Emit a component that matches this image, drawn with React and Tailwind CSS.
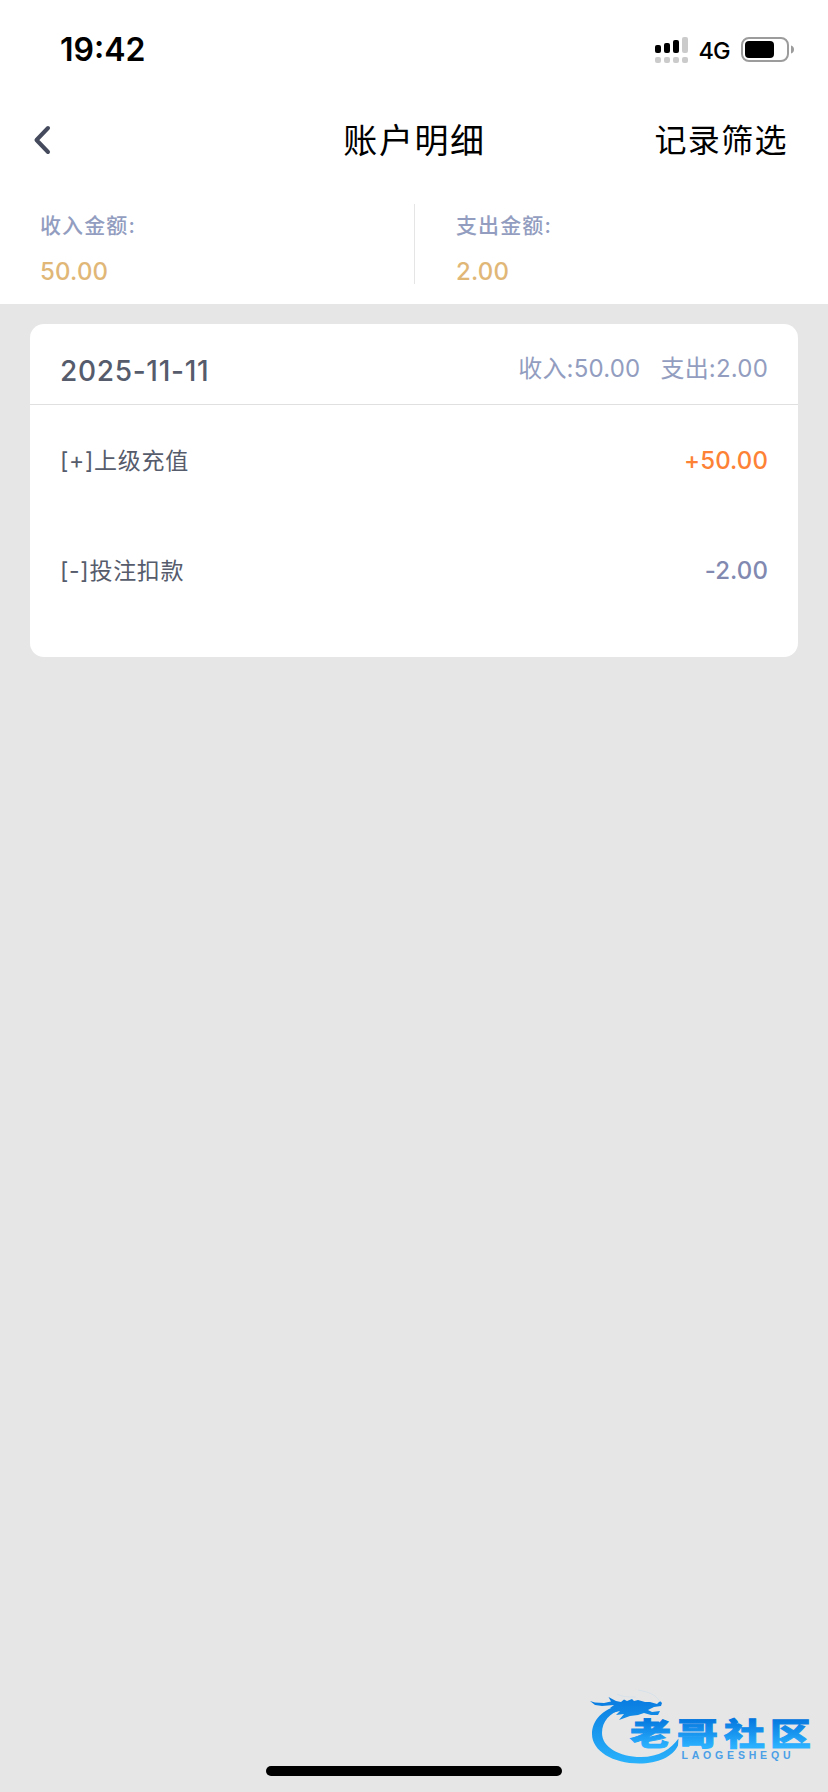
import React from 'react';

const summary = [
  { label: '收入金额:', value: '50.00' },
  { label: '支出金额:', value: '2.00' },
];

const records = [
  { id: 1, title: '[+]上级充值', amount: '+50.00', color: 'text-[#fd8236]' },
  { id: 2, title: '[-]投注扣款', amount: '-2.00', color: 'text-[#8189b0]' },
];

function StatusIcons() {
  return (
    <svg width="140" height="28" viewBox="0 0 140 28" className="block">
      {/* signal */}
      <g fill="#000">
        <rect x="0" y="9" width="6" height="8" rx="2" />
        <rect x="9" y="7" width="6" height="10" rx="2" />
        <rect x="18" y="4" width="6" height="13" rx="2" />
      </g>
      <g fill="#cbcbcb">
        <rect x="27" y="1" width="6" height="16" rx="2" />
        <rect x="0" y="21" width="6" height="6" rx="2" />
        <rect x="9" y="21" width="6" height="6" rx="2" />
        <rect x="18" y="21" width="6" height="6" rx="2" />
        <rect x="27" y="21" width="6" height="6" rx="2" />
      </g>
      <text x="43.5" y="23" fontSize="23.5" fontWeight="500" textLength="32" fill="#000">4G</text>
      {/* battery */}
      <rect x="87" y="2" width="46" height="23" rx="7" fill="none" stroke="#9c9c9c" strokeWidth="2" />
      <rect x="90" y="5" width="29" height="17" rx="4" fill="#000" />
      <path d="M136 9.5c2 .5 3 2 3 4s-1 3.500-3 4z" fill="#9c9c9c" />
    </svg>
  );
}

function Logo() {
  return (
    <svg width="258" height="112" viewBox="0 0 258 112" className="absolute right-0 bottom-0">
      <defs>
        <linearGradient id="ring" x1="0" y1="18" x2="0" y2="86" gradientUnits="userSpaceOnUse">
          <stop offset="0" stopColor="#087be0" />
          <stop offset="1" stopColor="#2bb4fc" />
        </linearGradient>
        <linearGradient id="word" x1="0" y1="2" x2="0" y2="-26" gradientUnits="userSpaceOnUse">
          <stop offset="0" stopColor="#2bb2ff" />
          <stop offset="1" stopColor="#0578df" />
        </linearGradient>
      </defs>
      <g fill="url(#ring)">
        <path d="M50 25C33 29 22 40 22 54c0 17 21 29.500 47 29.500 19 0 34-7 39-18l.5-7C101 69 89 77 71 77 49 77 32 67 32 53c0-12 8-20 20-24z" />
        <path d="M20 21L25 22.500L34 23L41 21.500L38.500 17L46 21L51 22L54 19.500L57 21L62 19L64 21L68 20L75 22L80 22L87 24L90 21L92 23L91 26L84 27L78 30L82 32L90 31L88 35L81 35L74 33L68 35L60 36L49 40L54 34L46 35L50 31L42 33L48 28L40 28L44 25L32 26L25 25Z" />
      </g>
      <path d="M47 14c5 3 12 3 19 3M68 10c10 2 18 4 22 12" fill="none" stroke="#d3dfea" strokeWidth="0.8" />
      <g
        fill="url(#word)"
        stroke="url(#word)"
        strokeWidth="0.9"
        fontWeight="900"
        fontSize="31"
        fontFamily="'Noto Sans CJK SC', sans-serif"
      >
        <text transform="translate(60 65) scale(1.32 0.98)">老</text>
        <text transform="translate(107 65) scale(1.32 0.98)">哥</text>
        <text transform="translate(154 65) scale(1.32 0.98)">社</text>
        <text transform="translate(200 65) scale(1.32 0.98)">区</text>
      </g>
      <text
        x="111.500"
        y="78.500"
        fontSize="10.500"
        fontWeight="700"
        fontFamily="'Liberation Sans', sans-serif"
        textLength="109"
        fill="#4a9fe6"
      >
        LAOGESHEQU
      </text>
    </svg>
  );
}

export default function App() {
  return (
    <div className="relative flex h-[1792px] w-[828px] flex-col overflow-hidden bg-[#e6e6e6] font-['Inter','Noto_Sans_CJK_SC',sans-serif]">
      <div className="h-[304px] bg-white">
        <div className="flex h-[100px] items-center justify-between pr-[33px] pl-[60px]">
          <span className="text-[32px] leading-none font-semibold">19:42</span>
          <StatusIcons />
        </div>

        <header className="grid h-20 grid-cols-[1fr_auto_1fr] items-center pr-10 pl-[33px] text-black">
          <svg width="18" height="30" viewBox="0 0 18 30" fill="none">
            <path d="M15 3 3.500 15 15 27" stroke="#454b5c" strokeWidth="4" strokeLinecap="round" strokeLinejoin="round" />
          </svg>
          <h1 className="pt-0.5 pl-2 text-center text-[34px] leading-10 tracking-[1.600px] whitespace-nowrap">账户明细</h1>
          <span className="pt-0.5 text-right text-[32px] leading-10 tracking-[1.400px] whitespace-nowrap">记录筛选</span>
        </header>

        <div className="mt-6 grid h-20 grid-cols-2">
          {summary.map((item) => (
            <div key={item.label} className="h-20 border-l border-[#e5e5e5] pl-[41px] first:border-l-0 first:pl-[40px]">
              <p className="mt-[7px] text-[21px] leading-[30px] font-medium tracking-[1.100px] text-[#929dc0]">{item.label}</p>
              <p className="mt-[15px] text-[24px] leading-[32px] font-[450] tracking-[0.200px] text-[#e1b777]">{item.value}</p>
            </div>
          ))}
        </div>
      </div>

      <section className="mx-[30px] mt-5 h-[333px] rounded-[14px] bg-white">
        <div className="flex h-[81px] items-center justify-between border-b border-[#e0e0e0] px-[30px]">
          <span className="pt-[13px] text-[28px] leading-9 font-[450] tracking-[0.700px] text-[#565c6c]">2025-11-11</span>
          <span className="flex gap-5 pt-[10px] text-[24px] leading-9 tracking-[0.200px] text-[#929dc0]">
            <span>收入:50.00</span>
            <span>支出:2.00</span>
          </span>
        </div>
        {records.map((r) => (
          <div key={r.id} className="flex h-[110px] items-center justify-between px-[30px] pt-0.5">
            <span className="text-[23px] leading-8 tracking-[0.700px] text-[#565c6c]">{r.title}</span>
            <span className={`text-[24px] leading-8 font-[450] tracking-[0.100px] ${r.color}`}>{r.amount}</span>
          </div>
        ))}
      </section>

      <Logo />
      <div className="mx-auto mt-auto mb-4 h-2.5 w-[296px] rounded-full bg-black" />
    </div>
  );
}
